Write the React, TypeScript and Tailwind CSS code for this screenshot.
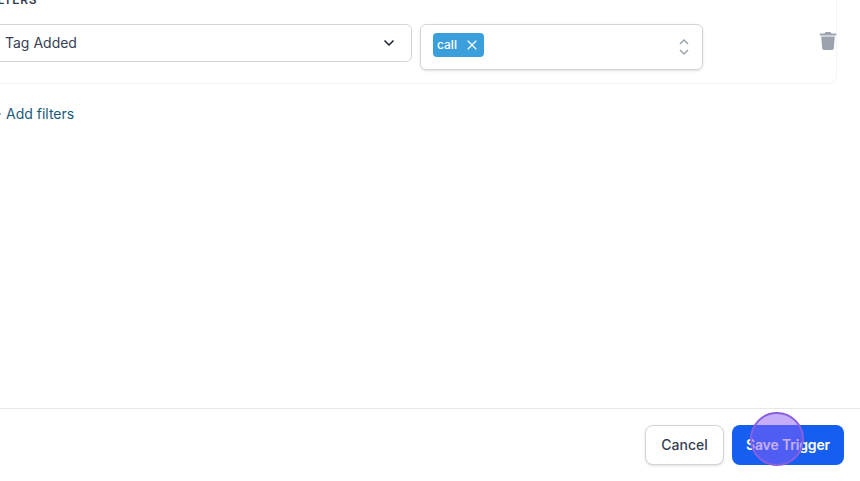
import { ChevronDown, Plus, X } from "lucide-react";

const App = () => {
  return (
    <div className="relative flex h-[481px] w-[860px] flex-col overflow-hidden bg-white font-['Inter',sans-serif]">
      <div className="flex-1 -ml-[20px] -mt-[8px]">
        <div className="mr-[23px] h-[92px] rounded-b-lg border-b border-r border-[#f3f4f6]">
          <div className="pl-[6px] text-xs font-semibold uppercase leading-4 tracking-wider text-[#344054]">
            Filters
          </div>
          <div className="mt-[16px] flex items-start">
            <div className="flex h-[38px] w-[432px] shrink-0 items-center justify-between rounded-md border border-[#d1d5db] pl-[24px] pr-[14px] text-sm text-[#374151]">
              Tag Added
              <ChevronDown size={16} strokeWidth={2.5} className="text-[#1f2937]" />
            </div>
            <div className="ml-[8px] flex h-[46px] w-[283px] shrink-0 items-center justify-between rounded-md border border-[#d1d5db] pb-[4px] pl-[12px] pr-[10px] shadow-sm">
              <span className="flex h-[24px] w-[51px] items-center justify-between rounded bg-[#3b9fdc] pl-[4px] pr-[4px] text-xs font-medium text-white">
                call
                <X size={16} strokeWidth={1.75} />
              </span>
              <svg width="16" height="18" viewBox="0 0 16 18" fill="none" stroke="#9ca3af" strokeWidth="1.5" className="mt-[4px]">
                <path d="M4 6l4-4 4 4" />
                <path d="M4 12l4 4 4-4" />
              </svg>
            </div>
            <svg width="20" height="20" viewBox="0 0 20 20" fill="#9ca3af" className="ml-[115px] mt-[7px] shrink-0">
              <path d="M7.5 1h5l1 1.6H18.2v1.8H1.8V2.6h4.7L7.5 1z" />
              <path d="M3.2 5.6h13.6l-1 12a1.6 1.6 0 0 1-1.6 1.4H5.8a1.6 1.6 0 0 1-1.6-1.4l-1-12z" />
            </svg>
          </div>
        </div>
        <div className="mt-[20px] flex items-center gap-[3px] text-sm leading-5 text-[#175a7a]">
          <Plus size={14} strokeWidth={2.5} className="ml-[9px]" />
          Add filters
        </div>
      </div>

      {/* footer */}
      <div className="flex h-[73px] items-start justify-end gap-[8px] border-t border-[#e5e7eb] pr-[16px] pt-[16px]">
        <button className="h-[40px] w-[79px] rounded-lg border border-[#d1d5db] bg-white text-sm font-medium text-[#374151] shadow-sm">
          Cancel
        </button>
        <button className="h-[40px] w-[112px] rounded-lg bg-[#155eef] text-sm font-semibold tracking-[-0.15px] text-white">
          Save Trigger
        </button>
      </div>

      {/* click highlight */}
      <div className="absolute left-[750px] top-[412px] h-[54px] w-[54px] rounded-full border-2 border-[#8a5fe0] bg-[#8b5cf6]/50" />
    </div>
  );
};

export default App;
